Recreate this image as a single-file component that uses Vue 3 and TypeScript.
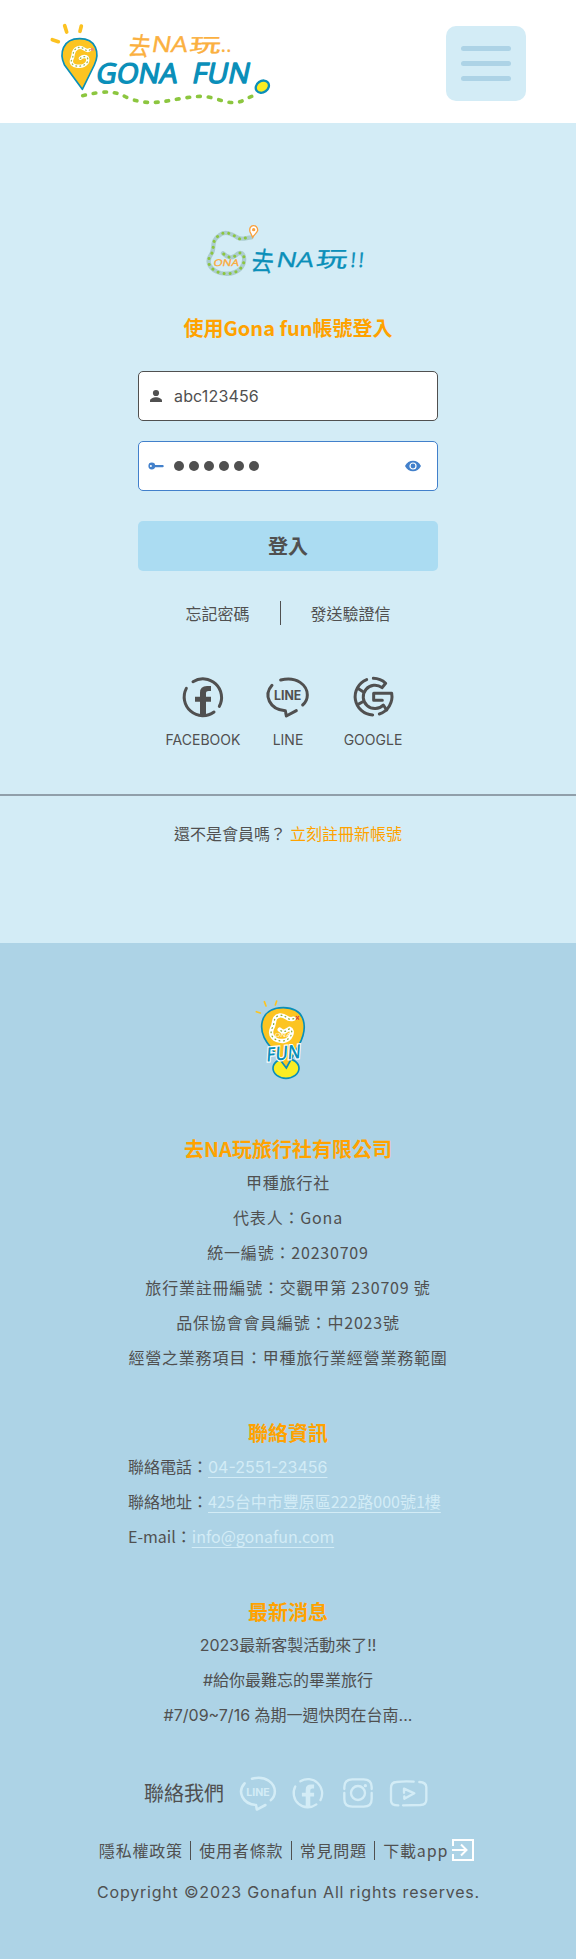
<script setup lang="ts">
import { ref } from 'vue'

const account = ref('abc123456')
const passwordDots = 6

const companyLines: string[] = [
  '甲種旅行社',
  '代表人：Gona',
  '統一編號：20230709',
  '旅行業註冊編號：交觀甲第 230709 號',
  '品保協會會員編號：中2023號',
  '經營之業務項目：甲種旅行業經營業務範圍',
]

const newsLines: string[] = [
  '2023最新客製活動來了!!',
  '#給你最難忘的畢業旅行',
  '#7/09~7/16 為期一週快閃在台南...',
]
</script>

<template>
  <div class="page">
    <header class="header">
      <svg class="brand" viewBox="0 0 780 339" aria-label="GONA FUN">
        <g fill="none" stroke="#fcc221" stroke-width="11" stroke-linecap="round">
          <path d="M67 89 L85 95" />
          <path d="M104 47 L110 66" />
          <path d="M154 48 L150 64" />
        </g>
        <path d="M157 238 L103 164 C88 132 96 86 149 86 C199 86 210 129 193 165 Z" fill="#fcc421" stroke="#0a8fb9" stroke-width="5" stroke-linejoin="round" />
        <g fill="none" stroke-linecap="round" stroke-linejoin="round">
          <path d="M180 119 C165 130 160 104 142 114 C124 123 134 133 125 149 C117 171 158 175 171 158 C180 139 162 135 151 145" stroke="#fff" stroke-width="10" />
          <path d="M180 119 C165 130 160 104 142 114 C124 123 134 133 125 149 C117 171 158 175 171 158 C180 139 162 135 151 145" stroke="#9dbb4d" stroke-width="4" stroke-dasharray="2 10" />
        </g>
        <circle cx="187" cy="118" r="5" fill="#ef8f72" />
        <g class="hand" fill="#fbb040" stroke="#fbb040" stroke-width="1.2">
          <text x="0" y="0" transform="translate(292 134) rotate(3) skewX(-8)" font-size="76" textLength="64" lengthAdjust="spacingAndGlyphs">去</text>
          <text x="0" y="0" transform="translate(362 127) skewX(-10)" font-size="66" textLength="108" lengthAdjust="spacingAndGlyphs">NA</text>
          <text x="0" y="0" transform="translate(476 126) skewX(-8)" font-size="58" textLength="94" lengthAdjust="spacingAndGlyphs">玩</text>
          <text x="572" y="126" font-size="58" textLength="32">..</text>
        </g>
        <g class="hand" fill="#0a8fb9" stroke="#0a8fb9" stroke-width="4" stroke-linejoin="round">
          <text x="0" y="0" transform="translate(195 218) skewX(-10)" font-size="82" textLength="244" lengthAdjust="spacingAndGlyphs">GONA</text>
          <text x="0" y="0" transform="translate(483 219) skewX(-12)" font-size="84" textLength="172" lengthAdjust="spacingAndGlyphs">FUN</text>
        </g>
        <path d="M158 257 C222 242 252 241 292 263 C375 297 428 260 520 259 C564 262 609 295 648 266 L670 257" fill="none" stroke="#8cc63f" stroke-width="11" stroke-linecap="round" stroke-dasharray="8 24" />
        <ellipse cx="697" cy="230" rx="21" ry="17" transform="rotate(-35 697 230)" fill="#faed23" stroke="#0a8fb9" stroke-width="7" />
      </svg>
      <button class="menu" type="button" aria-label="選單">
        <span v-for="n in 3" :key="n" class="menu-bar"></span>
      </button>
    </header>

    <main class="login">
      <svg class="login-logo" viewBox="0 0 570 225" aria-label="去NA玩">
        <g fill="none" stroke-linecap="round" stroke-linejoin="round">
          <path d="M184 82 C166 84 154 90 143 83 C125 72 105 61 88 76 C61 92 76 116 64 132 C45 158 62 180 91 189 C121 196 151 186 160 162 C167 139 158 124 143 131 C130 146 115 146 99 130" stroke="#accdcf" stroke-width="13" />
          <path d="M166 84 C154 88 154 90 143 83 C125 72 105 61 88 76 C61 92 76 116 64 132 C45 158 62 180 91 189 C121 196 151 186 160 162 C167 139 158 124 143 131 C130 146 115 146 99 130" stroke="#8cc63f" stroke-width="9" stroke-dasharray=".1 18" />
        </g>
        <path d="M188 82 L180 65 C174 42 204 41 203 61 C201 69 193 73 188 82 Z" fill="#fff" stroke="#f8a13f" stroke-width="4" />
        <circle cx="191" cy="59" r="5" fill="#f8a13f" />
        <text x="0" y="0" class="hand" transform="translate(69 168) skewX(-12)" font-size="28" fill="#fbaa3a" stroke="#fbaa3a" textLength="76" lengthAdjust="spacingAndGlyphs">ONA</text>
        <g class="hand" fill="#0a8fb9" stroke="#0a8fb9" stroke-width="1">
          <text x="0" y="0" transform="translate(181 180) rotate(5) skewX(-4)" font-size="80" textLength="66" lengthAdjust="spacingAndGlyphs">去</text>
          <text x="0" y="0" transform="translate(256 171) skewX(-12)" font-size="62" textLength="112" lengthAdjust="spacingAndGlyphs">NA</text>
          <text x="0" y="0" transform="translate(376 170) skewX(-8)" font-size="66" textLength="94" lengthAdjust="spacingAndGlyphs">玩</text>
          <text x="0" y="0" transform="translate(480 170) skewX(-5)" font-size="60" textLength="40">!!</text>
        </g>
      </svg>

      <h1 class="login-title">使用Gona fun帳號登入</h1>

      <form class="form" @submit.prevent>
        <label class="field">
          <svg class="field-icon" viewBox="0 0 16 16" fill="#505050">
            <circle cx="8" cy="5" r="3.1" />
            <path d="M2 14 V12.6 C2 10.6 5.5 9.3 8 9.3 S14 10.6 14 12.6 V14 Z" />
          </svg>
          <span class="account">{{ account }}</span>
        </label>
        <label class="field field-active">
          <svg class="field-icon" viewBox="0 0 16 16">
            <circle cx="3.8" cy="8" r="3.4" fill="#4280cb" />
            <rect x="6" y="7" width="9.7" height="2.3" rx="1" fill="#4280cb" />
            <circle cx="2.9" cy="8" r="1" fill="#fff" />
          </svg>
          <span class="dots"><i v-for="n in passwordDots" :key="n" class="dot"></i></span>
          <svg class="eye" viewBox="0 0 16 12">
            <path d="M0 6 C3.2 -1 12.8 -1 16 6 C12.8 13 3.2 13 0 6 Z" fill="#4280cb" />
            <circle cx="8" cy="6" r="3" fill="#4280cb" stroke="#fff" stroke-width="1.2" />
          </svg>
        </label>
        <button class="submit" type="submit">登入</button>
      </form>

      <div class="help">
        <a>忘記密碼</a>
        <span class="help-line"></span>
        <a>發送驗證信</a>
      </div>

      <div class="social">
        <a class="social-item">
          <svg class="social-icon" viewBox="96 48 126 126">
            <g class="stroke">
              <path d="M129 65 A56 56 0 0 1 208 139" />
              <path d="M192 156 A56 56 0 0 1 109 85" />
            </g>
            <path class="solid" d="M150 167 V125 H135 V110 H150 V98 Q150 78 171 78 H183 V93 H176 Q168 93 168 100 V110 H183 V125 H168 V167 Z" />
          </svg>
          <span>FACEBOOK</span>
        </a>
        <a class="social-item">
          <svg class="social-icon" viewBox="349 49 126 126">
            <g class="stroke">
              <path d="M364 77 C338 106 356 150 404 153 L407 169 L437 153" />
              <path d="M390 61 C439 48 470 78 470 106 C470 118 464 129 456 136" />
            </g>
            <text class="line-word" x="370" y="120" textLength="82" lengthAdjust="spacingAndGlyphs">LINE</text>
          </svg>
          <span>LINE</span>
        </a>
        <a class="social-item">
          <svg class="social-icon" viewBox="606 48 126 126">
            <g class="stroke">
              <path d="M650 59 A55 55 0 0 0 668 165" />
              <path d="M670 55 A55 55 0 0 1 707 70 L696 83 A35 35 0 1 0 700 135 L710 150" />
              <path d="M688 162 A55 55 0 0 0 725 100 H671 V121 H697" />
              <path d="M623 85 L637 94 M623 134 L637 126" />
            </g>
          </svg>
          <span>GOOGLE</span>
        </a>
      </div>

      <div class="register">
        <span>還不是會員嗎？</span>
        <a class="register-link">立刻註冊新帳號</a>
      </div>
    </main>

    <footer class="footer">
      <svg class="footer-logo" viewBox="0 0 360 330" aria-label="FUN">
        <g fill="none" stroke="#fcc421" stroke-width="5" stroke-linecap="round">
          <path d="M79 95 L91 99" />
          <path d="M103 65 L108 78" />
          <path d="M140 63 L136 75" />
        </g>
        <ellipse cx="168" cy="265" rx="39" ry="30" fill="#faed23" stroke="#0a8fb9" stroke-width="5" />
        <path d="M169 264 L124 204 C76 150 88 83 160 83 C230 84 234 145 207 195 Q186 232 169 264 Z" fill="#fcc421" stroke="#0a8fb9" stroke-width="5" />
        <g fill="none" stroke-linecap="round" stroke-linejoin="round">
          <path d="M191 116 C168 123 171 104 150 106 C126 110 136 132 126 145 C117 166 132 184 160 183 C184 179 192 151 179 146 C165 155 160 159 149 149" stroke="#fff" stroke-width="13" />
          <path d="M191 116 C168 123 171 104 150 106 C126 110 136 132 126 145 C117 166 132 184 160 183 C184 179 192 151 179 146 C165 155 160 159 149 149" stroke="#8cae35" stroke-width="4" stroke-dasharray="2 11" />
        </g>
        <text x="0" y="0" class="hand" transform="translate(133 171) skewX(-12)" font-size="17" fill="#fff" textLength="48" lengthAdjust="spacingAndGlyphs">ONA</text>
        <path d="M198 108 L207 119 M207 108 L198 119" stroke="#d8433f" stroke-width="3.5" />
        <text x="0" y="0" class="hand fun" transform="translate(108 245) rotate(-6) skewX(-10)" font-size="58" textLength="104" lengthAdjust="spacingAndGlyphs">FUN</text>
      </svg>

      <section class="company">
        <h2 class="footer-title">去NA玩旅行社有限公司</h2>
        <p v-for="line in companyLines" :key="line" class="row spaced">{{ line }}</p>
      </section>

      <section class="contact">
        <h2 class="footer-title">聯絡資訊</h2>
        <p class="row">聯絡電話：<a class="link inter">04-2551-23456</a></p>
        <p class="row">聯絡地址：<a class="link">425台中市豐原區222路000號1樓</a></p>
        <p class="row">E-mail：<a class="link">info@gonafun.com</a></p>
      </section>

      <section class="news">
        <h2 class="footer-title">最新消息</h2>
        <p v-for="line in newsLines" :key="line" class="row inter">{{ line }}</p>
      </section>

      <div class="follow">
        <span class="follow-label">聯絡我們</span>
        <svg class="f-line" viewBox="348 48 126 126">
          <g class="stroke">
            <path d="M364 77 C338 106 356 150 404 153 L407 169 L437 153" />
            <path d="M390 61 C439 48 470 78 470 106 C470 118 464 129 456 136" />
          </g>
          <text class="line-word" x="370" y="120" textLength="82" lengthAdjust="spacingAndGlyphs">LINE</text>
        </svg>
        <svg class="f-fb" viewBox="96 48 126 126">
          <g class="stroke">
            <path d="M129 65 A56 56 0 0 1 208 139" />
            <path d="M192 156 A56 56 0 0 1 109 85" />
          </g>
          <path class="solid" d="M150 167 V125 H135 V110 H150 V98 Q150 78 171 78 H183 V93 H176 Q168 93 168 100 V110 H183 V125 H168 V167 Z" />
        </svg>
        <svg class="f-ig" viewBox="636 42 96 96">
          <g class="stroke thin">
            <path d="M643 78 V72 Q643 49 667 49 H701 Q725 49 725 72 V78" />
            <path d="M725 90 V108 Q725 131 701 131 H667 Q643 131 643 108 V90" />
            <circle cx="684" cy="90" r="21" />
          </g>
          <circle class="solid" cx="706" cy="68" r="5" />
        </svg>
        <svg class="f-yt" viewBox="778 48 120 90">
          <g class="stroke thin">
            <path d="M806 130 Q784 130 784 116 V78 Q784 61 800 60 Q826 57 852 59" />
            <path d="M869 60 Q890 61 890 76 V113 Q890 128 872 129 L820 130" />
            <path d="M823 92 V80 L854 94 L824 110 V103" />
          </g>
        </svg>
      </div>

      <nav class="policies">
        <a>隱私權政策</a><span class="bar"></span>
        <a>使用者條款</a><span class="bar"></span>
        <a>常見問題</a><span class="bar"></span>
        <a>下載app</a>
        <svg class="exit" viewBox="0 0 24 24" fill="none" stroke="#fff" stroke-width="2">
          <path d="M2 8 V2 H22 V22 H2 V16" />
          <path d="M1 12 H15 M10 6.5 L15.5 12 L10 17.5" />
        </svg>
      </nav>
      <p class="copyright">Copyright ©2023 Gonafun All rights reserves.</p>
    </footer>
  </div>
</template>

<style>
body {
  margin: 0;
}
</style>

<style scoped>
.page {
  width: 576px;
  font-family: "Noto Sans CJK TC", sans-serif;
  font-size: 16px;
  color: #505050;
}
h1, h2, p { margin: 0; }
svg { display: block; flex: none; overflow: visible; }
.hand { font-family: "Open Sans", "Noto Sans CJK TC", sans-serif; }

.header {
  box-sizing: border-box;
  height: 123px;
  padding: 10px 50px 0 30px;
  display: flex;
  justify-content: space-between;
  background: #fff;
}
.brand { width: 260px; height: 113px; }
.menu {
  box-sizing: border-box;
  width: 80px;
  height: 75px;
  margin-top: 16px;
  padding: 0;
  border: 0;
  border-radius: 10px;
  background: #d3ecf6;
  display: flex;
  flex-direction: column;
  align-items: center;
  justify-content: center;
  gap: 10px;
}
.menu-bar { width: 50px; height: 5px; border-radius: 3px; background: #add3e6; }

.login {
  box-sizing: border-box;
  height: 820px;
  padding-top: 87px;
  background: #d3ecf6;
  display: flex;
  flex-direction: column;
  align-items: center;
}
.login-logo { width: 190px; height: 75px; margin-right: 6px; }
.login-title {
  margin-top: 28px;
  line-height: 30px;
  font-size: 20px;
  font-weight: 700;
  color: #ffa200;
}
.form { display: flex; flex-direction: column; gap: 20px; margin-top: 28.4px; }
.field {
  box-sizing: border-box;
  width: 300px;
  height: 50px;
  padding: 0 16px 0 9px;
  display: flex;
  align-items: center;
  border: 1px solid #505050;
  border-radius: 5px;
  background: #fff;
}
.field-active { border-color: #4280cb; }
.field-icon { width: 16px; height: 16px; }
.account { margin-left: 10px; font-family: Inter, sans-serif; font-size: 16px; letter-spacing: 0.15px; }
.dots { display: flex; gap: 5px; margin-left: 10px; }
.dot { width: 10px; height: 10px; border-radius: 50%; background: #505050; }
.eye { width: 16px; height: 12px; margin-left: auto; }
.submit {
  width: 300px;
  height: 50px;
  margin-top: 10px;
  padding: 0 0 2px;
  border: 0;
  border-radius: 5px;
  background: #abdcf2;
  color: #505050;
  font: 700 20px "Noto Sans CJK TC", sans-serif;
}
.help {
  display: grid;
  grid-template-columns: 64px 1px 80px;
  column-gap: 30px;
  align-items: center;
  margin-top: 29.6px;
  line-height: 25px;
}
.help-line { height: 24px; background: #505050; }
.social {
  display: grid;
  grid-template-columns: 75px 75px 75px;
  column-gap: 10px;
  margin-top: 50px;
  font-family: Inter, sans-serif;
  font-size: 14px;
  line-height: 20px;
}
.social-item { display: flex; flex-direction: column; align-items: center; gap: 12px; }
.social-icon { width: 42px; height: 42px; }
.stroke {
  fill: none;
  stroke: currentColor;
  stroke-width: 9;
  stroke-linecap: round;
  stroke-linejoin: round;
}
.thin { stroke-width: 7; }
.solid { fill: currentColor; }
.line-word { font: 700 38px Inter, sans-serif; fill: currentColor; }
.register {
  width: 100%;
  margin-top: 44px;
  padding-top: 25px;
  border-top: 2px solid #909faa;
  display: flex;
  justify-content: center;
  gap: 4px;
  line-height: 24px;
}
.register-link { color: #ffa200; }

.footer {
  box-sizing: border-box;
  height: 1016px;
  padding-top: 37px;
  background: #add3e6;
  display: flex;
  flex-direction: column;
  align-items: center;
}
.footer-logo { width: 120px; height: 110px; margin-left: 4px; }
.footer-logo .fun {
  fill: #0a8fb9;
  stroke: #fff;
  stroke-width: 7;
  paint-order: stroke;
  font-weight: 600;
}
.footer-title {
  line-height: 34px;
  margin-bottom: -1px;
  font-size: 20px;
  font-weight: 700;
  color: #ffa200;
  text-align: center;
}
.row { height: 35px; line-height: 35px; white-space: nowrap; text-align: center; }
.spaced { letter-spacing: 0.8px; }
.inter { font-family: Inter, "Noto Sans CJK TC", sans-serif; }
.company { margin-top: 42px; }
.contact { width: 320px; margin-top: 41px; }
.contact .row { text-align: left; }
.link { color: #d3ecf6; text-decoration: underline; text-underline-offset: 4px; }
.news { margin-top: 41px; }
.follow { display: flex; align-items: center; margin-top: 41px; margin-right: 3px; height: 38px; }
.follow-label { font-size: 20px; line-height: 30px; }
.follow svg { color: #d3ecf6; }
.f-line { width: 36px; height: 36px; margin-left: 16px; }
.f-fb { width: 32px; height: 32px; margin-left: 16px; }
.f-ig { width: 32px; height: 32px; margin-left: 18px; }
.f-yt { width: 40px; height: 30px; margin-left: 15px; }
.policies {
  display: flex;
  align-items: center;
  margin-top: 25px;
  margin-right: 2px;
  height: 26px;
  letter-spacing: 0.8px;
}
.bar { width: 1px; height: 19px; margin: 0 8px 0 7.4px; background: #505050; }
.exit { width: 24px; height: 24px; margin-left: 3px; }
.copyright {
  margin: 17px 0 0 1px;
  font-family: Inter, sans-serif;
  line-height: 24px;
  letter-spacing: 0.8px;
  white-space: nowrap;
}
</style>
